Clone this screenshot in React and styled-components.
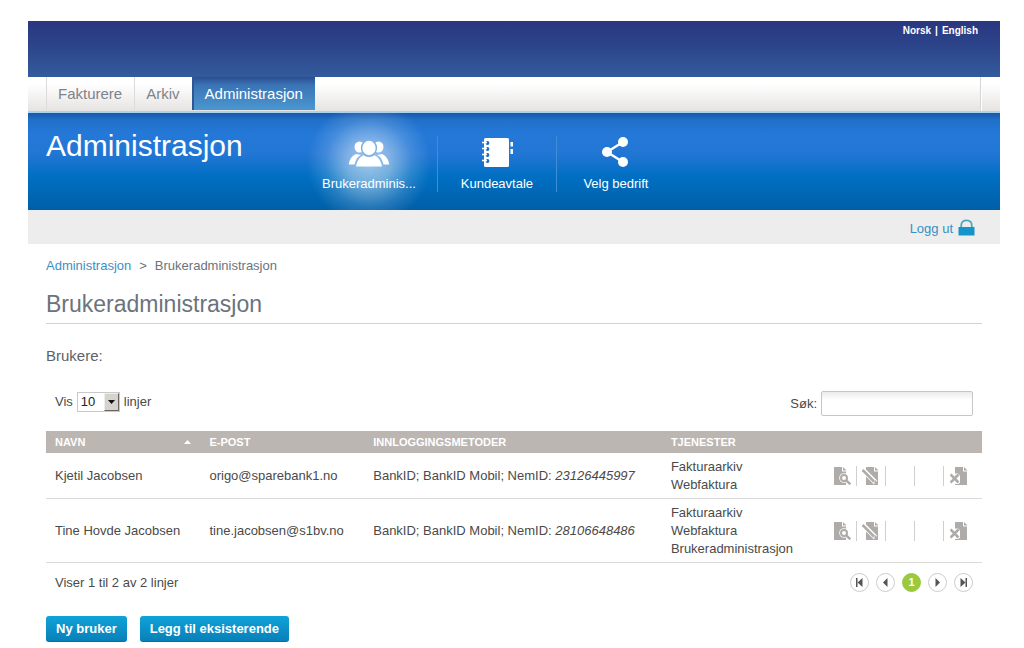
import styled, { createGlobalStyle, css } from "styled-components";

const TEXT = "#4a4a4a";
const MUTED = "#6b737c";
const LINK = "#3b8fc4";
const RULE = "#dadada";
const TAUPE = "#bbb6b2";
const ICON_GREY = "#aeaba8";

const GlobalStyle = createGlobalStyle`
  * {
    box-sizing: border-box;
  }

  body {
    margin: 0;
    background: #fff;
    color: ${TEXT};
    font-family: "Liberation Sans", Arial, sans-serif;
    font-size: 13px;
    line-height: 18px;
  }

  button,
  input,
  select {
    font: inherit;
    color: inherit;
  }
`;

const Page = styled.div`
  margin: 21px 24px 0 28px;
`;

const TopBar = styled.header`
  display: flex;
  justify-content: flex-end;
  height: 56px;
  padding: 1px 22px 0 0;
  background: linear-gradient(#2a3780, #2c4389 40%, #335b9c);
`;

const Languages = styled.div`
  display: flex;
  gap: 4px;
  color: #fff;
  font-size: 10px;
  font-weight: 700;

  a {
    color: inherit;
    text-decoration: none;
  }
`;

const MainNav = styled.nav`
  display: flex;
  height: 36px;
  padding: 0 18px;
  border-bottom: 2px solid #a9d3f2;
  background: linear-gradient(#fff 20%, #e6e4e2);
`;

const MainNavItem = styled.a`
  height: 33px;
  padding: 0 12px 0 11px;
  border-left: 1px solid #dcdcdc;
  color: #7d838c;
  font-size: 15px;
  line-height: 33px;
  text-decoration: none;

  ${({ $active }) =>
    $active &&
    css`
      border-left: 2px solid #2f5796;
      background: linear-gradient(#2b4c93, #3a74b4 25%, #4b97d0);
      color: #fff;
    `}
`;

const NavEnd = styled.span`
  margin-left: auto;
  border-left: 1px solid #d6d6d6;
  border-right: 1px solid #fff;
`;

const Hero = styled.section`
  display: flex;
  height: 97px;
  padding: 0 18px;
  background: linear-gradient(
    #1a57a6,
    #2070ca 7%,
    #2479d8 22%,
    #2276d4 42%,
    #006fc2 66%,
    #005fa8
  );
`;

const HeroTitle = styled.h1`
  flex: 0 0 255px;
  margin: 16px 0 0;
  color: #fff;
  font-size: 30px;
  font-weight: 400;
  line-height: 34px;
`;

const SubTabs = styled.nav`
  display: flex;
`;

const SubTab = styled.a`
  display: flex;
  flex-direction: column;
  align-items: center;
  gap: 8px;
  min-width: 118px;
  padding: 24px 21px 0;
  color: #fff;
  text-decoration: none;
  ${({ $active }) =>
    $active &&
    css`
      background: radial-gradient(
        circle 62px at 50% 50px,
        rgba(255, 255, 255, 0.58),
        rgba(255, 255, 255, 0.44) 35%,
        rgba(255, 255, 255, 0.15) 70%,
        transparent
      );
    `}
`;

const Divider = styled.span`
  width: 1px;
  height: 56px;
  margin-top: 23px;
  background: #3f8fd8;
`;

const SessionBar = styled.div`
  display: flex;
  justify-content: flex-end;
  height: 34px;
  padding: 0 25px;
  background: #ededed;
`;

const LogOut = styled.a`
  display: flex;
  align-items: center;
  gap: 5px;
  padding-top: 4px;
  color: ${LINK};
  text-decoration: none;

  svg {
    margin-bottom: 4px;
  }
`;

const Content = styled.main`
  padding: 13px 18px 0;
`;

const Breadcrumb = styled.nav`
  display: flex;
  gap: 8px;
  color: ${MUTED};

  a {
    color: ${LINK};
    text-decoration: none;
  }
`;

const Heading = styled.h2`
  margin: 15px 0 23px;
  padding-bottom: 5px;
  border-bottom: 1px solid #d2d2d2;
  color: ${MUTED};
  font-size: 23px;
  font-weight: 400;
  line-height: 28px;
`;

const Subheading = styled.h3`
  margin: 0;
  color: #5d6268;
  font-size: 15px;
  font-weight: 400;
`;

const Toolbar = styled.div`
  display: flex;
  justify-content: space-between;
  margin: 26px 0 15px;
  padding: 0 9px;
`;

const LengthLabel = styled.label`
  display: flex;
  align-items: center;
  gap: 4px;
  height: 22px;
`;

const SelectBox = styled.span`
  position: relative;
  display: flex;
  width: 43px;
  height: 20px;
  border: 1px solid #c9c9c9;
`;

const Select = styled.select`
  width: 100%;
  padding: 0 0 0 3px;
  border: 0;
  background: #fff;
  color: #222;
  appearance: none;
`;

const SelectArrow = styled.span`
  position: absolute;
  top: 0;
  right: 0;
  bottom: 0;
  display: grid;
  place-items: center;
  width: 15px;
  border: 1px solid;
  border-color: #eee #666 #666 #eee;
  background: #d6d3ce;
  pointer-events: none;
`;

const SearchLabel = styled.label`
  display: flex;
  align-items: center;
  gap: 4px;
`;

const SearchInput = styled.input`
  width: 152px;
  height: 25px;
  padding: 0 6px;
  border: 1px solid #c6c6c6;
  border-radius: 2px;
  background: linear-gradient(#ebebeb, #fff 35%);
`;

const Table = styled.table`
  width: 100%;
  border-collapse: collapse;
  table-layout: fixed;
`;

const HeadCell = styled.th`
  width: ${({ $width }) => $width};
  height: 22px;
  padding: 0 9px;
  background: ${TAUPE};
  color: #fff;
  font-size: 11px;
  text-align: left;
`;

const SortButton = styled.button`
  display: flex;
  align-items: center;
  justify-content: space-between;
  width: 100%;
  padding: 0;
  border: 0;
  background: none;
  font-weight: 700;
`;

const Cell = styled.td`
  padding: 5px 0 4px 9px;
  border-bottom: 1px solid ${RULE};
  white-space: nowrap;
`;

const Actions = styled.div`
  display: grid;
  grid-template-columns: repeat(5, 29px);
`;

const ActionSlot = styled.span`
  display: grid;
  place-items: center;
  height: 20px;
  border-right: 1px solid #cfcfcf;

  &:last-child {
    border-right: 0;
  }
`;

const IconButton = styled.button`
  display: flex;
  padding: 0;
  border: 0;
  background: none;
  cursor: pointer;
`;

const TableFooter = styled.div`
  display: flex;
  align-items: center;
  justify-content: space-between;
  padding: 10px 9px 0;
`;

const Pager = styled.nav`
  display: flex;
  gap: 7px;
`;

const PageButton = styled.button`
  display: grid;
  place-items: center;
  width: 19px;
  height: 19px;
  padding: 0;
  border: 1px solid ${({ $current }) => ($current ? "#9ac93c" : "#cccccc")};
  border-radius: 50%;
  background: ${({ $current }) => ($current ? "#9ac93c" : "#fff")};
  color: ${({ $current }) => ($current ? "#fff" : "#555")};
  font-size: 11px;
  font-weight: 700;
  line-height: 17px;
`;

const ButtonRow = styled.div`
  display: flex;
  gap: 13px;
  margin-top: 24px;
`;

const Button = styled.button`
  height: 26px;
  padding: 0 10px;
  border: 0;
  border-bottom: 1px solid #0b6d9f;
  border-radius: 3px;
  background: linear-gradient(#0fa3d9, #0880b8);
  color: #fff;
  font-weight: 700;
`;

const UsersIcon = () => (
  <svg width="42" height="30" viewBox="0 0 42 30" fill="#fff">
    <ellipse cx="11.500" cy="10" rx="5" ry="5.500" />
    <ellipse cx="30.500" cy="10" rx="5" ry="5.500" />
    <path d="M.8 27.500c.8-5.500 3-8.500 7.200-10.500l5 1c-4 2-5 4.500-6.500 9.500z" />
    <path d="M41.200 27.500c-.8-5.500-3-8.500-7.200-10.500l-5 1c4 2 5 4.500 6.500 9.500z" />
    <ellipse cx="21" cy="11" rx="8.200" ry="8.600" fill="#7fb0e4" />
    <ellipse cx="21" cy="11" rx="6.700" ry="7.200" />
    <path d="M8 29.500c.8-5 3-9 7.500-11.300 3.500 2.600 7.500 2.600 11 0 4.500 2.300 6.700 6.300 7.500 11.300z" />
  </svg>
);

const NotebookIcon = () => (
  <svg width="34" height="30" viewBox="0 0 34 30">
    <rect x="4" y="1" width="25" height="29" rx="1.500" fill="#fff" />
    <path d="M30.500 5H33v4.500h-2.500zM30.500 12H33v5h-2.500z" fill="#fff" />
    {[5.5, 11.5, 17.5, 23.5].map((y) => (
      <g key={y}>
        <circle cx="7.500" cy={y + 0.5} r="1.900" fill="#1c6fc6" />
        <path d={`M2 ${y}h5`} stroke="#fff" strokeWidth="1.600" />
      </g>
    ))}
  </svg>
);

const ShareIcon = () => (
  <svg width="28" height="30" viewBox="0 0 28 30" fill="#fff">
    <path d="M21 5 5 15l16 10" fill="none" stroke="#fff" strokeWidth="2.400" />
    <circle cx="5" cy="15" r="5" />
    <circle cx="21" cy="5" r="5" />
    <circle cx="21" cy="25" r="5" />
  </svg>
);

const LockIcon = () => (
  <svg width="17" height="17" viewBox="0 0 17 17">
    <path
      d="M3.200 8V6.500C3.200 3 5.500 1.400 8.500 1.400s5.300 1.600 5.300 5.100V8"
      fill="none"
      stroke="#4fa6bf"
      strokeWidth="1.800"
    />
    <path d="M.500 8h16v8.500H.500z" fill="#1594cb" />
  </svg>
);

const ViewIcon = () => (
  <svg width="18" height="18" viewBox="0 0 18 18">
    <path d="M1 0h8v4.500h4V18H1z" fill={ICON_GREY} />
    <path d="M10 0l3.500 3.500H10z" fill={ICON_GREY} />
    <circle cx="11" cy="11" r="4.800" fill="#fff" />
    <path d="M14 14l3.500 3.500" stroke="#fff" strokeWidth="4" />
    <circle cx="11" cy="11" r="3" fill="#fff" stroke={ICON_GREY} strokeWidth="2" />
    <path d="M13.300 13.300l4 4" stroke={ICON_GREY} strokeWidth="2.400" />
  </svg>
);

const EditIcon = () => (
  <svg width="18" height="18" viewBox="0 0 18 18">
    <path d="M4 0h8v4.500h4V18H4z" fill={ICON_GREY} />
    <path d="M13 0l3.500 3.500H13z" fill={ICON_GREY} />
    <path d="M0 2l13.500 13.500" stroke="#fff" strokeWidth="5" />
    <path d="M.500 3l11.500 11.500" stroke={ICON_GREY} strokeWidth="2.600" />
    <path d="M11.500 15.500l3 .500-.500-3z" fill={ICON_GREY} />
  </svg>
);

const DeleteIcon = () => (
  <svg width="18" height="18" viewBox="0 0 18 18">
    <path d="M5 0h8v4.500h4V18H5z" fill={ICON_GREY} />
    <path d="M14 0l3.500 3.500H14z" fill={ICON_GREY} />
    <path d="M0 6.500h8l2 2v7l-1.500 1.500H0z" fill="#fff" />
    <path d="M.500 7.500l8 8M8.500 7.500l-8 8" stroke={ICON_GREY} strokeWidth="2.600" />
  </svg>
);

const PagerIcon = ({ flip, bar }) => (
  <svg width="9" height="9" viewBox="0 0 9 9" fill="#555">
    <g transform={flip ? "translate(9 0) scale(-1 1)" : undefined}>
      {bar && <path d="M1 0h1.500v9H1z" />}
      <path d={bar ? "M7.500 0v9L2.500 4.500z" : "M6.500 0v9L2 4.500z"} />
    </g>
  </svg>
);

const users = [
  {
    name: "Kjetil Jacobsen",
    email: "origo@sparebank1.no",
    nemId: "23126445997",
    services: ["Fakturaarkiv", "Webfaktura"],
  },
  {
    name: "Tine Hovde Jacobsen",
    email: "tine.jacobsen@s1bv.no",
    nemId: "28106648486",
    services: ["Fakturaarkiv", "Webfaktura", "Brukeradministrasjon"],
  },
];

const UserRow = ({ name, email, nemId, services }) => (
  <tr>
    <Cell>{name}</Cell>
    <Cell>{email}</Cell>
    <Cell>
      BankID; BankID Mobil; NemID: <em>{nemId}</em>
    </Cell>
    <Cell>
      {services.map((service) => (
        <div key={service}>{service}</div>
      ))}
    </Cell>
    <Cell>
      <Actions>
        <ActionSlot>
          <IconButton aria-label={`Vis ${name}`}>
            <ViewIcon />
          </IconButton>
        </ActionSlot>
        <ActionSlot>
          <IconButton aria-label={`Rediger ${name}`}>
            <EditIcon />
          </IconButton>
        </ActionSlot>
        <ActionSlot />
        <ActionSlot />
        <ActionSlot>
          <IconButton aria-label={`Slett ${name}`}>
            <DeleteIcon />
          </IconButton>
        </ActionSlot>
      </Actions>
    </Cell>
  </tr>
);

export default function App() {
  return (
    <Page>
      <GlobalStyle />
      <TopBar>
        <Languages>
          <a href="#no">Norsk</a>
          <span>|</span>
          <a href="#en">English</a>
        </Languages>
      </TopBar>
      <MainNav>
        <MainNavItem href="#fakturere">Fakturere</MainNavItem>
        <MainNavItem href="#arkiv">Arkiv</MainNavItem>
        <MainNavItem href="#administrasjon" $active>
          Administrasjon
        </MainNavItem>
        <NavEnd />
      </MainNav>
      <Hero>
        <HeroTitle>Administrasjon</HeroTitle>
        <SubTabs>
          <SubTab href="#brukere" $active>
            <UsersIcon />
            Brukeradminis...
          </SubTab>
          <Divider />
          <SubTab href="#kundeavtale">
            <NotebookIcon />
            Kundeavtale
          </SubTab>
          <Divider />
          <SubTab href="#bedrift">
            <ShareIcon />
            Velg bedrift
          </SubTab>
        </SubTabs>
      </Hero>
      <SessionBar>
        <LogOut href="#logg-ut">
          Logg ut
          <LockIcon />
        </LogOut>
      </SessionBar>
      <Content>
        <Breadcrumb>
          <a href="#administrasjon">Administrasjon</a>
          <span>&gt;</span>
          <span>Brukeradministrasjon</span>
        </Breadcrumb>
        <Heading>Brukeradministrasjon</Heading>
        <Subheading>Brukere:</Subheading>
        <Toolbar>
          <LengthLabel>
            Vis
            <SelectBox>
              <Select defaultValue="10">
                <option>10</option>
              </Select>
              <SelectArrow>
                <svg width="7" height="4" viewBox="0 0 7 4">
                  <path d="M0 0h7L3.500 4z" fill="#111" />
                </svg>
              </SelectArrow>
            </SelectBox>
            linjer
          </LengthLabel>
          <SearchLabel>
            Søk:
            <SearchInput type="text" />
          </SearchLabel>
        </Toolbar>
        <Table>
          <thead>
            <tr>
              <HeadCell $width="16.5%">
                <SortButton>
                  NAVN
                  <svg width="7" height="4" viewBox="0 0 7 4">
                    <path d="M0 4h7L3.500 0z" fill="#fff" />
                  </svg>
                </SortButton>
              </HeadCell>
              <HeadCell $width="17.5%">E-POST</HeadCell>
              <HeadCell $width="31.8%">INNLOGGINGSMETODER</HeadCell>
              <HeadCell $width="16.8%">TJENESTER</HeadCell>
              <HeadCell />
            </tr>
          </thead>
          <tbody>
            {users.map((user) => (
              <UserRow key={user.email} {...user} />
            ))}
          </tbody>
        </Table>
        <TableFooter>
          <span>Viser 1 til 2 av 2 linjer</span>
          <Pager>
            <PageButton aria-label="Første">
              <PagerIcon bar />
            </PageButton>
            <PageButton aria-label="Forrige">
              <PagerIcon />
            </PageButton>
            <PageButton $current>1</PageButton>
            <PageButton aria-label="Neste">
              <PagerIcon flip />
            </PageButton>
            <PageButton aria-label="Siste">
              <PagerIcon flip bar />
            </PageButton>
          </Pager>
        </TableFooter>
        <ButtonRow>
          <Button>Ny bruker</Button>
          <Button>Legg til eksisterende</Button>
        </ButtonRow>
      </Content>
    </Page>
  );
}
